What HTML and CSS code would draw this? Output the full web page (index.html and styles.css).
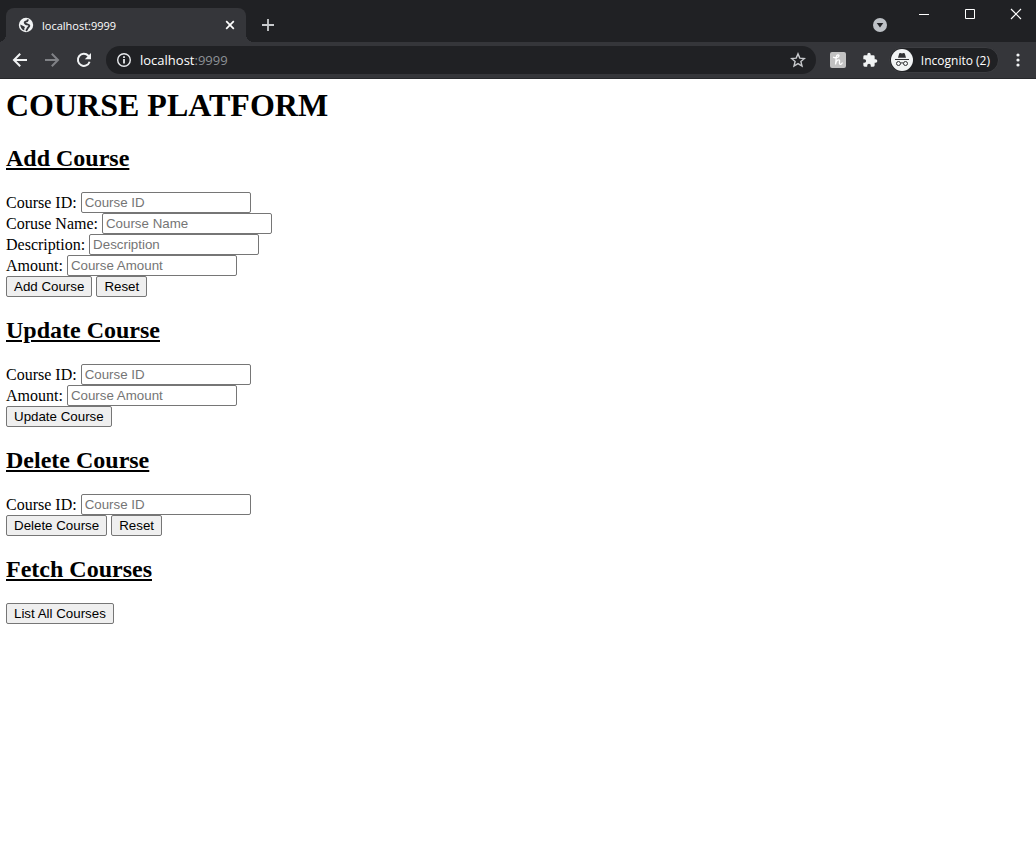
FILE: index.html
```html
<!DOCTYPE html>
<html lang="en">
<head>
<meta charset="utf-8">
<title>localhost:9999</title>
<link rel="stylesheet" href="styles.css">
</head>
<body>
<header class="browser">
  <div class="tabstrip">
    <div class="tab">
      <svg class="globe" width="16" height="16" viewBox="0 0 16 16"><circle cx="8" cy="8" r="7.200" fill="#f1f3f4"/><path d="M9.500 2.300C10.300 4 8.800 4.300 7.500 4.600 6 5 7 6.600 8 7c1.200.5 3 .2 3.300 1.500.3 1.500-1.500 1.700-1.800 3-.2.900-.8 1.600-1.500 2.300" fill="none" stroke="#35363a" stroke-width="1.900"/><path d="M2.300 7.600l4 2c.8.500.7 1.500 0 1.700v2.300C4 12.800 2.200 10.500 2.300 7.600z" fill="#35363a"/></svg>
      <span class="tab-title">localhost:9999</span>
      <button class="icon-btn" aria-label="Close tab"><svg width="16" height="16" viewBox="0 0 16 16"><path d="M4.200 4.200l7.600 7.600M11.800 4.200l-7.600 7.600" stroke="#fff" stroke-width="1.700"/></svg></button>
    </div>
    <button class="icon-btn new-tab" aria-label="New tab"><svg width="16" height="16" viewBox="0 0 16 16"><path d="M8 2v12M2 8h12" stroke="#c8cacd" stroke-width="1.800"/></svg></button>
    <button class="icon-btn tab-search" aria-label="Search tabs"><svg width="16" height="16" viewBox="0 0 16 16"><circle cx="8" cy="8" r="7" fill="#bdc1c6"/><path d="M4.700 6h6.600L8 10.500z" fill="#202124"/></svg></button>
    <div class="window-controls">
      <button class="icon-btn" aria-label="Minimize"><svg width="12" height="12" viewBox="0 0 12 12"><path d="M1 6.500h10" stroke="#fff"/></svg></button>
      <button class="icon-btn" aria-label="Maximize"><svg width="12" height="12" viewBox="0 0 12 12"><path d="M1.500 1.500h9v9h-9z" fill="none" stroke="#fff"/></svg></button>
      <button class="icon-btn" aria-label="Close"><svg width="12" height="12" viewBox="0 0 12 12"><path d="M1 1l10 10M11 1L1 11" stroke="#fff" stroke-width="1.200"/></svg></button>
    </div>
  </div>
  <div class="toolbar">
    <nav class="nav">
      <button class="icon-btn" aria-label="Back"><svg width="16" height="16" viewBox="0 0 16 16"><path d="M15 8H2M8.200 1.800L2 8l6.200 6.200" fill="none" stroke="#f1f3f4" stroke-width="2"/></svg></button>
      <button class="icon-btn" aria-label="Forward"><svg width="16" height="16" viewBox="0 0 16 16"><path d="M1 8h13M7.800 1.800L14 8l-6.200 6.200" fill="none" stroke="#808286" stroke-width="2"/></svg></button>
      <button class="icon-btn" aria-label="Reload"><svg width="16" height="16" viewBox="0 0 16 16"><path d="M13.600 9.700A6 6 0 1 1 12.300 3.800L13.500 5" fill="none" stroke="#f1f3f4" stroke-width="2"/><path d="M15 1v6.200H8.800z" fill="#f1f3f4"/></svg></button>
    </nav>
    <div class="omnibox">
      <svg width="16" height="16" viewBox="0 0 16 16"><circle cx="8" cy="8" r="6.300" fill="none" stroke="#e8eaed" stroke-width="1.400"/><path d="M8 7v4.500M8 4.300v1.700" stroke="#e8eaed" stroke-width="1.800"/></svg>
      <span class="url">localhost<span class="port">:9999</span></span>
      <button class="icon-btn" aria-label="Bookmark"><svg width="16" height="16" viewBox="0 0 16 16"><path d="M8 1.900l1.800 4.200 4.600.4-3.500 3 1.100 4.500L8 11.600 4 14l1.100-4.500-3.500-3 4.600-.4z" fill="none" stroke="#c8cacd" stroke-width="1.400"/></svg></button>
    </div>
    <button class="icon-btn" aria-label="Honey"><svg width="16" height="16" viewBox="0 0 16 16"><rect width="16" height="16" rx="2" fill="#c1c1c1"/><path d="M3.500 5.300C5 6.300 9 5.500 9 3.800 9 2.600 6.600 2.600 6.400 4.500L5.500 12.500C6 9.800 7.300 7.800 8.700 7.800 10.200 7.800 9.300 10 9.400 11.300 9.500 12.700 11.300 12.700 12.200 11" fill="none" stroke="#fff" stroke-width="1.300" stroke-linecap="round"/></svg></button>
    <button class="icon-btn" aria-label="Extensions"><svg width="16" height="16" viewBox="0 0 24 24"><path d="M20.500 11H19V7a2 2 0 0 0-2-2h-4V3.500a2.500 2.500 0 0 0-5 0V5H4a2 2 0 0 0-2 2v3.800h1.500a2.700 2.700 0 0 1 0 5.400H2V20a2 2 0 0 0 2 2h3.800v-1.500a2.700 2.700 0 0 1 5.400 0V22H17a2 2 0 0 0 2-2v-4h1.500a2.500 2.500 0 0 0 0-5z" fill="#f1f3f4"/></svg></button>
    <button class="profile"><svg width="22" height="22" viewBox="0 0 22 22"><circle cx="11" cy="11" r="11" fill="#f1f3f4"/><path d="M7 8.800l1.200-4.300c.2-.6.700-.7 1.200-.5l1.600.5 1.600-.5c.5-.2 1 0 1.200.5L15 8.800z" fill="#303134"/><path d="M4 10.500h14M9.500 14.200q1.500-.8 3 0" fill="none" stroke="#303134"/><circle cx="7.500" cy="14.500" r="2" fill="none" stroke="#303134"/><circle cx="14.500" cy="14.500" r="2" fill="none" stroke="#303134"/></svg><span>Incognito (2)</span></button>
    <button class="icon-btn" aria-label="Menu"><svg width="16" height="16" viewBox="0 0 16 16" fill="#f1f3f4"><circle cx="8" cy="3" r="1.600"/><circle cx="8" cy="8" r="1.600"/><circle cx="8" cy="13" r="1.600"/></svg></button>
  </div>
</header>
<main class="page">
  <h1>COURSE PLATFORM</h1>
  <h2>Add Course</h2>
  <form>
    <div class="row"><label for="add-id">Course ID:</label><input id="add-id" type="text" placeholder="Course ID"></div>
    <div class="row"><label for="add-name">Coruse Name:</label><input id="add-name" type="text" placeholder="Course Name"></div>
    <div class="row"><label for="add-desc">Description:</label><input id="add-desc" type="text" placeholder="Description"></div>
    <div class="row"><label for="add-amount">Amount:</label><input id="add-amount" type="text" placeholder="Course Amount"></div>
    <div class="row"><button class="btn" type="button">Add Course</button><button class="btn" type="reset">Reset</button></div>
  </form>
  <h2>Update Course</h2>
  <form>
    <div class="row"><label for="up-id">Course ID:</label><input id="up-id" type="text" placeholder="Course ID"></div>
    <div class="row"><label for="up-amount">Amount:</label><input id="up-amount" type="text" placeholder="Course Amount"></div>
    <div class="row"><button class="btn" type="button">Update Course</button></div>
  </form>
  <h2>Delete Course</h2>
  <form>
    <div class="row"><label for="del-id">Course ID:</label><input id="del-id" type="text" placeholder="Course ID"></div>
    <div class="row"><button class="btn" type="button">Delete Course</button><button class="btn" type="reset">Reset</button></div>
  </form>
  <h2>Fetch Courses</h2>
  <form>
    <div class="row"><button class="btn" type="button">List All Courses</button></div>
  </form>
</main>
</body>
</html>
```
FILE: styles.css
```css
* { box-sizing: border-box; }
body {
  margin: 0;
  background: #fff;
  color: #000;
  font-family: "Liberation Serif", serif;
  font-size: 16px;
}
svg { display: block; flex: none; }
.browser {
  overflow: hidden;
  font-family: "Open Sans", "Noto Sans", sans-serif;
  font-size: 12px;
  color: #fff;
}
.icon-btn {
  display: flex;
  padding: 0;
  border: 0;
  background: none;
}
.tabstrip {
  display: flex;
  align-items: flex-end;
  height: 42px;
  padding: 0 14px 0 6px;
  background: #202124;
}
.tab {
  position: relative;
  display: flex;
  align-items: center;
  gap: 8px;
  width: 240px;
  height: 34px;
  padding: 0 8px 0 12px;
  border-radius: 8px 8px 0 0;
  background: #35363a;
}
/* curved feet where the tab joins the toolbar */
.tab::before,
.tab::after {
  content: "";
  position: absolute;
  bottom: 0;
  width: 8px;
  height: 8px;
}
.tab::before {
  right: 100%;
  background: radial-gradient(circle at 0 0, transparent 8px, #35363a 8px);
}
.tab::after {
  left: 100%;
  background: radial-gradient(circle at 100% 0, transparent 8px, #35363a 8px);
}
.tab-title { flex: 1; font-size: 11px; }
.new-tab { margin: 0 0 9px 14px; }
.tab-search { margin: 0 30px 9px auto; }
.window-controls {
  display: flex;
  gap: 34px;
  align-self: flex-start;
  padding-top: 8px;
}
.toolbar {
  display: flex;
  align-items: center;
  gap: 14px;
  height: 37px;
  padding: 0 10px 0 12px;
  background: #35363a;
  border-bottom: 1px solid #27282b;
}
.nav { display: flex; gap: 16px; }
.omnibox {
  display: flex;
  flex: 1;
  align-items: center;
  gap: 8px;
  height: 28px;
  padding: 0 10px;
  border-radius: 14px;
  background: #202124;
  font-size: 13px;
}
.url { flex: 1; }
.port { color: #8d9196; }
.omnibox + .icon-btn { margin-right: 2px; }
.profile {
  display: flex;
  align-items: center;
  gap: 8px;
  height: 26px;
  margin: 0 -3px;
  padding: 0 8px 0 1px;
  border: 1px solid #3c3d41;
  border-radius: 13px;
  background: #202124;
  color: #fff;
  font-family: inherit;
  font-size: 12px;
}
.page { padding: 8px 6px; }
h1 {
  margin: 0 0 21px;
  font-size: 32px;
  line-height: 37px;
}
h2 {
  margin: 20px 0;
  font-size: 24px;
  line-height: 27px;
  text-decoration: underline;
}
.row {
  display: flex;
  align-items: center;
  gap: 4px;
  height: 21px;
}
.row input,
.btn {
  height: 21px;
  border: 1px solid #767676;
  border-radius: 2px;
  font-family: "Liberation Sans", Arial, sans-serif;
}
.row input {
  width: 170px;
  padding: 1px 3px;
}
.row input::placeholder { color: #757575; }
.btn {
  padding: 0 7px;
  background: #efefef;
  color: #000;
}
```
